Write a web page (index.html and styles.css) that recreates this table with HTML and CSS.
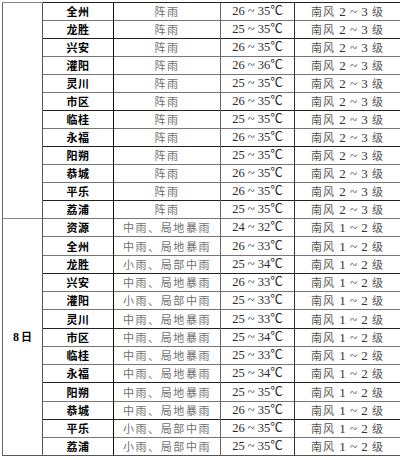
FILE: index.html
```html
<!DOCTYPE html>
<html lang="zh-CN">
<head>
<meta charset="utf-8">
<title>天气预报</title>
<link rel="stylesheet" href="styles.css">
</head>
<body>
<table class="wx">
<colgroup>
<col class="w1"><col class="w2"><col class="w3"><col class="w4"><col class="w5">
</colgroup>
<tbody>
<tr class="r dk"><td class="c1" rowspan="12"></td><td class="city">全州</td><td class="wea">阵雨</td><td class="tmp">26 ~ 35℃</td><td class="wind"><span class="cn">南风</span> 2 ~ 3 <span class="cn">级</span></td></tr>
<tr class="r lt"><td class="city">龙胜</td><td class="wea">阵雨</td><td class="tmp">25 ~ 35℃</td><td class="wind"><span class="cn">南风</span> 2 ~ 3 <span class="cn">级</span></td></tr>
<tr class="r dk"><td class="city">兴安</td><td class="wea">阵雨</td><td class="tmp">26 ~ 35℃</td><td class="wind"><span class="cn">南风</span> 2 ~ 3 <span class="cn">级</span></td></tr>
<tr class="r lt"><td class="city">灌阳</td><td class="wea">阵雨</td><td class="tmp">26 ~ 36℃</td><td class="wind"><span class="cn">南风</span> 2 ~ 3 <span class="cn">级</span></td></tr>
<tr class="r lt"><td class="city">灵川</td><td class="wea">阵雨</td><td class="tmp">25 ~ 35℃</td><td class="wind"><span class="cn">南风</span> 2 ~ 3 <span class="cn">级</span></td></tr>
<tr class="r lt"><td class="city">市区</td><td class="wea">阵雨</td><td class="tmp">26 ~ 35℃</td><td class="wind"><span class="cn">南风</span> 2 ~ 3 <span class="cn">级</span></td></tr>
<tr class="r dk"><td class="city">临桂</td><td class="wea">阵雨</td><td class="tmp">25 ~ 35℃</td><td class="wind"><span class="cn">南风</span> 2 ~ 3 <span class="cn">级</span></td></tr>
<tr class="r lt"><td class="city">永福</td><td class="wea">阵雨</td><td class="tmp">26 ~ 35℃</td><td class="wind"><span class="cn">南风</span> 2 ~ 3 <span class="cn">级</span></td></tr>
<tr class="r dk"><td class="city">阳朔</td><td class="wea">阵雨</td><td class="tmp">25 ~ 35℃</td><td class="wind"><span class="cn">南风</span> 2 ~ 3 <span class="cn">级</span></td></tr>
<tr class="r lt"><td class="city">恭城</td><td class="wea">阵雨</td><td class="tmp">26 ~ 35℃</td><td class="wind"><span class="cn">南风</span> 2 ~ 3 <span class="cn">级</span></td></tr>
<tr class="r lt"><td class="city">平乐</td><td class="wea">阵雨</td><td class="tmp">26 ~ 35℃</td><td class="wind"><span class="cn">南风</span> 2 ~ 3 <span class="cn">级</span></td></tr>
<tr class="r dk"><td class="city">荔浦</td><td class="wea">阵雨</td><td class="tmp">25 ~ 35℃</td><td class="wind"><span class="cn">南风</span> 2 ~ 3 <span class="cn">级</span></td></tr>
<tr class="r lt"><td class="c1 day" rowspan="13"><span class="num">8</span>日</td><td class="city">资源</td><td class="wea">中雨、局地暴雨</td><td class="tmp">24 ~ 32℃</td><td class="wind"><span class="cn">南风</span> 1 ~ 2 <span class="cn">级</span></td></tr>
<tr class="r lt tall"><td class="city">全州</td><td class="wea">中雨、局地暴雨</td><td class="tmp">26 ~ 33℃</td><td class="wind"><span class="cn">南风</span> 1 ~ 2 <span class="cn">级</span></td></tr>
<tr class="r lt"><td class="city">龙胜</td><td class="wea">小雨、局部中雨</td><td class="tmp">25 ~ 34℃</td><td class="wind"><span class="cn">南风</span> 1 ~ 2 <span class="cn">级</span></td></tr>
<tr class="r dk"><td class="city">兴安</td><td class="wea">中雨、局地暴雨</td><td class="tmp">26 ~ 33℃</td><td class="wind"><span class="cn">南风</span> 1 ~ 2 <span class="cn">级</span></td></tr>
<tr class="r lt"><td class="city">灌阳</td><td class="wea">小雨、局部中雨</td><td class="tmp">25 ~ 33℃</td><td class="wind"><span class="cn">南风</span> 1 ~ 2 <span class="cn">级</span></td></tr>
<tr class="r lt tall"><td class="city">灵川</td><td class="wea">中雨、局地暴雨</td><td class="tmp">25 ~ 33℃</td><td class="wind"><span class="cn">南风</span> 1 ~ 2 <span class="cn">级</span></td></tr>
<tr class="r dk"><td class="city">市区</td><td class="wea">中雨、局地暴雨</td><td class="tmp">25 ~ 34℃</td><td class="wind"><span class="cn">南风</span> 1 ~ 2 <span class="cn">级</span></td></tr>
<tr class="r lt"><td class="city">临桂</td><td class="wea">中雨、局地暴雨</td><td class="tmp">25 ~ 33℃</td><td class="wind"><span class="cn">南风</span> 1 ~ 2 <span class="cn">级</span></td></tr>
<tr class="r lt"><td class="city">永福</td><td class="wea">中雨、局地暴雨</td><td class="tmp">25 ~ 34℃</td><td class="wind"><span class="cn">南风</span> 1 ~ 2 <span class="cn">级</span></td></tr>
<tr class="r dk tall"><td class="city">阳朔</td><td class="wea">中雨、局地暴雨</td><td class="tmp">25 ~ 35℃</td><td class="wind"><span class="cn">南风</span> 1 ~ 2 <span class="cn">级</span></td></tr>
<tr class="r lt"><td class="city">恭城</td><td class="wea">中雨、局地暴雨</td><td class="tmp">26 ~ 35℃</td><td class="wind"><span class="cn">南风</span> 1 ~ 2 <span class="cn">级</span></td></tr>
<tr class="r dk"><td class="city">平乐</td><td class="wea">小雨、局部中雨</td><td class="tmp">26 ~ 35℃</td><td class="wind"><span class="cn">南风</span> 1 ~ 2 <span class="cn">级</span></td></tr>
<tr class="r lt"><td class="city">荔浦</td><td class="wea">小雨、局部中雨</td><td class="tmp">25 ~ 35℃</td><td class="wind"><span class="cn">南风</span> 1 ~ 2 <span class="cn">级</span></td></tr>
</tbody>
</table>
</body>
</html>
```
FILE: styles.css
```css
html, body {
  margin: 0;
  padding: 0;
  background: #fff;
}
body {
  padding: 2px 0 0 2px;
  font-family: "Noto Sans CJK SC", sans-serif;
}
.wx {
  border-collapse: collapse;
  table-layout: fixed;
  width: 398px;
  border-top: 1px solid #111;
  border-bottom: 1px solid #555;
  border-left: 1px solid #666;
  border-right: 1px solid #555;
}
.w1 { width: 40px; }
.w2 { width: 71px; }
.w3 { width: 107px; }
.w4 { width: 74px; }
.w5 { width: 106px; }
.wx td {
  padding: 0;
  text-align: center;
  vertical-align: middle;
  line-height: 1;
  white-space: nowrap;
  border-left: 1px solid #555;
  border-top: 1px solid #777;
}
.r { height: 18px; }
.r.tall { height: 19px; }
.r.dk td { border-top-color: #222; }
.wx td.c1 {
  border-left-color: #666;
  border-top-color: #888;
}
.wx td.wea { border-left-color: #111; }
.wx td.tmp { border-left-color: #666; }
.wx td.wind { border-left-color: #333; }
.city {
  font-size: 11px;
  font-weight: 700;
  color: #000;
  letter-spacing: 0.5px;
  padding-right: 3px;
}
.wea {
  font-size: 11px;
  color: #707070;
  letter-spacing: 1.6px;
  padding-right: 2px;
}
.tmp {
  font-family: "Liberation Serif", "Noto Sans CJK SC", serif;
  font-size: 12.5px;
  color: #2a2a2a;
}
.wind {
  font-family: "Liberation Serif", "Noto Sans CJK SC", serif;
  font-size: 13px;
  color: #333;
  word-spacing: 1px;
}
.wind .cn {
  font-family: "Noto Sans CJK SC", sans-serif;
  font-size: 11px;
  color: #555;
  letter-spacing: 1px;
}
.day {
  font-size: 11px;
  font-weight: 700;
  color: #000;
}
.day .num {
  font-family: "Liberation Serif", serif;
  font-size: 12px;
  margin-right: 2px;
}
```
